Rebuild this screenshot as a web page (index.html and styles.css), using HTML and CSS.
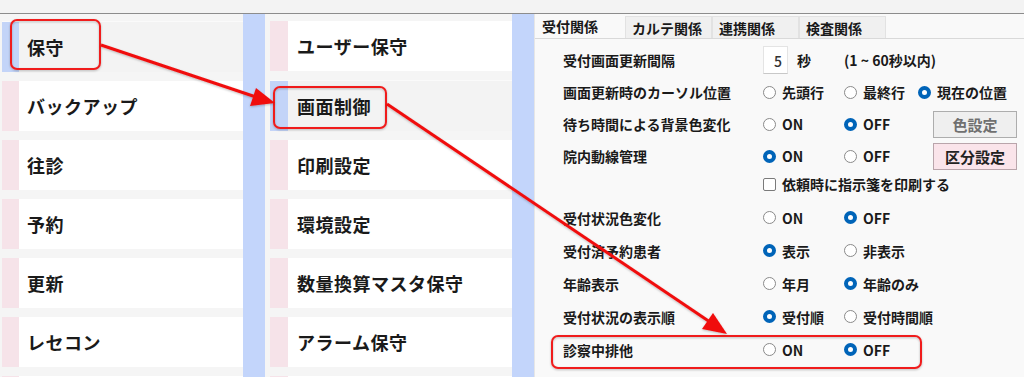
FILE: index.html
```html
<!DOCTYPE html>
<html lang="ja">
<head>
    <meta charset="UTF-8">
    <meta name="viewport" content="width=device-width, initial-scale=1.0">
    <title>画面制御</title>
    <link rel="stylesheet" href="styles.css">
</head>
<body>
    <div class="topbar"></div>
    <div class="main">
        <div class="menu">
            <div class="item active">保守</div>
            <div class="item">バックアップ</div>
            <div class="item">往診</div>
            <div class="item">予約</div>
            <div class="item">更新</div>
            <div class="item">レセコン</div>
            <div class="item"></div>
        </div>
        <div class="rail"></div>
        <div class="menu menu-sub">
            <div class="item">ユーザー保守</div>
            <div class="item active">画面制御</div>
            <div class="item">印刷設定</div>
            <div class="item">環境設定</div>
            <div class="item">数量換算マスタ保守</div>
            <div class="item">アラーム保守</div>
            <div class="item"></div>
        </div>
        <div class="rail"></div>
        <div class="panel">
            <div class="tabs">
                <div class="tab current">受付関係</div>
                <div class="tab">カルテ関係</div>
                <div class="tab">連携関係</div>
                <div class="tab">検査関係</div>
            </div>
            <div class="form">
                <div class="row">
                    <span class="label">受付画面更新間隔</span>
                    <span class="num-field"><span class="num">5</span><span class="unit">秒</span></span>
                    <span class="hint">(1 ~ 60秒以内)</span>
                </div>
                <div class="row">
                    <span class="label">画面更新時のカーソル位置</span>
                    <span class="opt"><i class="radio"></i>先頭行</span>
                    <span class="opt"><i class="radio"></i>最終行</span>
                    <span class="opt"><i class="radio on"></i>現在の位置</span>
                </div>
                <div class="row">
                    <span class="label">待ち時間による背景色変化</span>
                    <span class="opt"><i class="radio"></i>ON</span>
                    <span class="opt"><i class="radio on"></i>OFF</span>
                    <button class="btn">色設定</button>
                </div>
                <div class="row">
                    <span class="label">院内動線管理</span>
                    <span class="opt"><i class="radio on"></i>ON</span>
                    <span class="opt"><i class="radio"></i>OFF</span>
                    <button class="btn btn-pink">区分設定</button>
                </div>
                <div class="row row-check">
                    <span class="label"></span>
                    <span class="opt wide"><i class="check"></i>依頼時に指示箋を印刷する</span>
                </div>
                <div class="row row-gap">
                    <span class="label">受付状況色変化</span>
                    <span class="opt"><i class="radio"></i>ON</span>
                    <span class="opt"><i class="radio on"></i>OFF</span>
                </div>
                <div class="row row-tall">
                    <span class="label">受付済予約患者</span>
                    <span class="opt"><i class="radio on"></i>表示</span>
                    <span class="opt"><i class="radio"></i>非表示</span>
                </div>
                <div class="row row-tall">
                    <span class="label">年齢表示</span>
                    <span class="opt"><i class="radio"></i>年月</span>
                    <span class="opt"><i class="radio on"></i>年齢のみ</span>
                </div>
                <div class="row row-tall">
                    <span class="label">受付状況の表示順</span>
                    <span class="opt"><i class="radio on"></i>受付順</span>
                    <span class="opt"><i class="radio"></i>受付時間順</span>
                </div>
                <div class="row row-tall">
                    <span class="label">診察中排他</span>
                    <span class="opt"><i class="radio"></i>ON</span>
                    <span class="opt"><i class="radio on"></i>OFF</span>
                </div>
            </div>
        </div>
    </div>

    <!-- annotation layer: callout boxes and arrows drawn over the screen -->
    <svg class="annot" width="1024" height="377" viewBox="0 0 1024 377">
        <defs>
            <filter id="soft" x="-10%" y="-10%" width="120%" height="120%">
                <feDropShadow dx="0" dy="1" stdDeviation="1.2" flood-color="#000" flood-opacity="0.25"/>
            </filter>
        </defs>
        <g fill="none" stroke="#f01e1e" stroke-width="2" filter="url(#soft)">
            <rect x="11" y="20" width="89" height="49" rx="6"/>
            <rect x="274" y="87" width="112" height="41" rx="6"/>
            <rect x="552" y="336" width="369" height="32" rx="6"/>
        </g>
        <g stroke="#f01010" stroke-width="3" fill="#f01010" filter="url(#soft)">
            <line x1="101" y1="45" x2="256" y2="97"/>
            <polygon points="275,103 250,106 256,88" stroke="none"/>
            <line x1="387" y1="104" x2="710" y2="322"/>
            <polygon points="727,334 702,329 713,313" stroke="none"/>
        </g>
    </svg>
</body>
</html>
```

FILE: styles.css
```css
body {
    margin: 0;
    width: 1024px;
    height: 377px;
    overflow: hidden;
    position: relative;
    background-color: #f5f5f5;
    font-family: "Noto Sans CJK JP", "Noto Sans", sans-serif;
    color: #1a1a1a;
}

.topbar {
    height: 13px;
    background-color: #f3f3f3;
    border-bottom: 1px solid #8c8c8c;
}

.main {
    display: flex;
    height: 363px;
    overflow: hidden;
}

.menu {
    width: 241px;
    padding: 7px 0 0 2px;
    display: flex;
    flex-direction: column;
    gap: 9px;
    overflow: hidden;
}

.menu-sub {
    width: 242px;
    padding-left: 5px;
}

.item {
    flex: 0 0 50px;
    display: flex;
    align-items: center;
    background: white;
    font-size: 18px;
    font-weight: 700;
    letter-spacing: 0.5px;
}

.item::before {
    content: "";
    align-self: stretch;
    width: 17px;
    margin-right: 8px;
    background-color: #f6e3e9;
}

.menu-sub .item::before {
    width: 18px;
    margin-right: 9px;
}

.item.active {
    background-color: #f3f3f3;
    border-top: 1px solid #fafafa;
}

.item.active::before {
    background-color: #c3d4f8;
}

.rail {
    width: 22px;
    background-color: #c3d5fb;
}

.panel {
    flex: 1;
    background-color: #f9f9f9;
    border-left: 1px solid #e6e6e6;
}

.tabs {
    display: flex;
    height: 24px;
    border-bottom: 1px solid #d9d9d9;
}

.tab {
    width: 87px;
    padding-left: 6px;
    margin-top: 2px;
    font-size: 14px;
    font-weight: 700;
    line-height: 22px;
    background-color: #f0f0f0;
    border: 1px solid #e2e2e2;
    border-bottom: none;
    box-sizing: border-box;
}

.tab.current {
    width: 90px;
    margin-top: 0;
    padding-left: 6px;
    background-color: #f9f9f9;
    border-color: #f9f9f9;
}

.form {
    padding: 5px 0 0 28px;
}

.row {
    display: grid;
    grid-template-columns: 200px 81px 74px auto;
    align-items: center;
    height: 32px;
    font-size: 14px;
    font-weight: 700;
}

.row-check {
    height: 24px;
}

.row-gap {
    margin-top: 5px;
    height: 33px;
}

.row-tall {
    height: 33px;
}

.opt {
    display: flex;
    align-items: center;
    white-space: nowrap;
}

.opt.wide {
    grid-column: 2 / 5;
}

.radio {
    flex-shrink: 0;
    width: 13px;
    height: 13px;
    margin-right: 6px;
    border: 1px solid #8a8a8a;
    border-radius: 50%;
    box-sizing: border-box;
    background: white;
}

.radio.on {
    border: 4px solid #0064b8;
}

.check {
    flex-shrink: 0;
    width: 13px;
    height: 13px;
    margin-right: 6px;
    border: 1px solid #7a7a7a;
    border-radius: 2px;
    box-sizing: border-box;
    background: white;
}

.num-field {
    display: flex;
    align-items: center;
    grid-column: 2 / 3;
}

.num {
    width: 25px;
    height: 28px;
    padding-right: 5px;
    box-sizing: border-box;
    text-align: right;
    line-height: 28px;
    font-weight: 500;
    background: white;
    border: 1px solid #e4e4e4;
    border-bottom-color: #c8c8c8;
    color: #333;
}

.unit {
    margin-left: 9px;
}

.hint {
    grid-column: 3 / 5;
    white-space: nowrap;
}

.btn {
    justify-self: start;
    margin-left: 15px;
    width: 84px;
    height: 27px;
    font-family: inherit;
    font-size: 15px;
    font-weight: 700;
    color: #707070;
    background-color: #efefef;
    border: 1px solid #adadad;
    border-radius: 0;
    padding: 0;
}

.btn-pink {
    color: #222;
    background-color: #fae4ea;
    border-color: #b9a5ab;
}

.annot {
    position: absolute;
    left: 0;
    top: 0;
    pointer-events: none;
}
```
